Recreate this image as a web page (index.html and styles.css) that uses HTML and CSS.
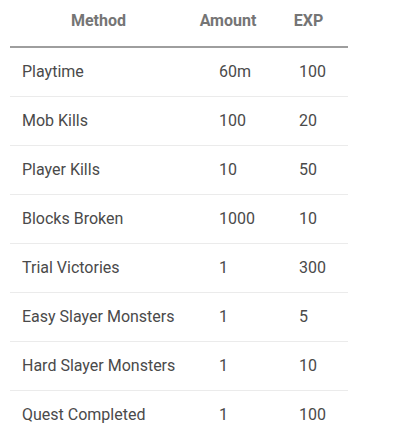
FILE: index.html
```html
<!DOCTYPE html>
<html lang="en">
<head>
    <meta charset="UTF-8">
    <meta name="viewport" content="width=device-width, initial-scale=1.0">
    <title>EXP Methods</title>
    <link rel="stylesheet" href="styles.css">
</head>
<body>

<div class="exp-table">
    <div class="head">
        <div>Method</div>
        <div>Amount</div>
        <div>EXP</div>
    </div>
    <div class="row"><div>Playtime</div><div>60m</div><div>100</div></div>
    <div class="row"><div>Mob Kills</div><div>100</div><div>20</div></div>
    <div class="row"><div>Player Kills</div><div>10</div><div>50</div></div>
    <div class="row"><div>Blocks Broken</div><div>1000</div><div>10</div></div>
    <div class="row"><div>Trial Victories</div><div>1</div><div>300</div></div>
    <div class="row"><div>Easy Slayer Monsters</div><div>1</div><div>5</div></div>
    <div class="row"><div>Hard Slayer Monsters</div><div>1</div><div>10</div></div>
    <div class="row"><div>Quest Completed</div><div>1</div><div>100</div></div>
</div>

</body>
</html>
```

FILE: styles.css
```css
body {
    font-family: Roboto, "Noto Sans", sans-serif;
    background-color: #ffffff;
    margin: 0;
    padding: 0 10px;
}
.exp-table {
    width: 338px;
    font-size: 16px;
}
.head {
    display: grid;
    grid-template-columns: 177px 82px 79px;
    text-align: center;
    font-weight: 700;
    color: #757575;
    height: 42px;
    line-height: 42px;
    padding-bottom: 4px;
    border-bottom: 2px solid #9e9e9e;
}
.row {
    display: grid;
    grid-template-columns: 197px 80px 61px;
    height: 48px;
    line-height: 48px;
    color: #4a4a4a;
    border-bottom: 1px solid #ebebeb;
}
.row > div {
    padding-left: 12px;
    white-space: nowrap;
}
```
